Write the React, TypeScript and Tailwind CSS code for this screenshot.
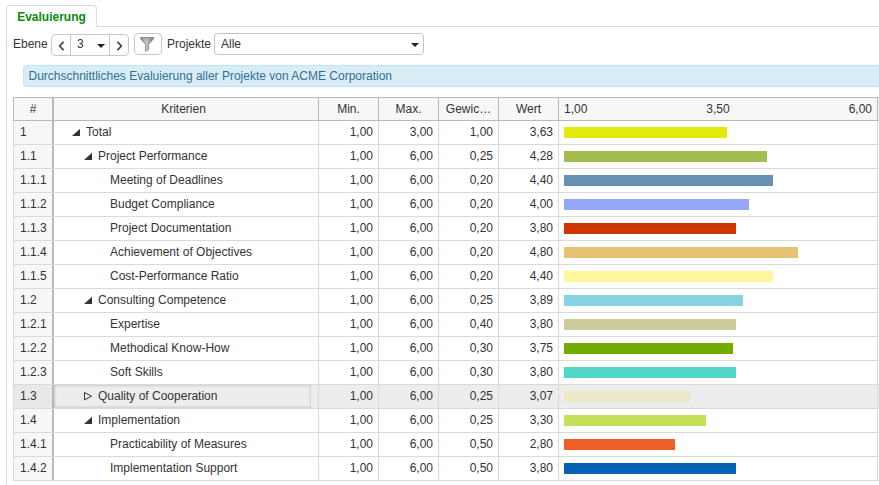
type Row = {
  no: string;
  name: string;
  min: string;
  max: string;
  weight: string;
  value: string;
  bar: number;
  color: string;
  state?: "open" | "closed";
};

const rows: Row[] = [
  { no: "1", name: "Total", min: "1,00", max: "3,00", weight: "1,00", value: "3,63", bar: 163, color: "bg-[#e1ea0b]", state: "open" },
  { no: "1.1", name: "Project Performance", min: "1,00", max: "6,00", weight: "0,25", value: "4,28", bar: 203, color: "bg-[#a5bd4f]", state: "open" },
  { no: "1.1.1", name: "Meeting of Deadlines", min: "1,00", max: "6,00", weight: "0,20", value: "4,40", bar: 209, color: "bg-[#6592b2]" },
  { no: "1.1.2", name: "Budget Compliance", min: "1,00", max: "6,00", weight: "0,20", value: "4,00", bar: 185, color: "bg-[#94a8fa]" },
  { no: "1.1.3", name: "Project Documentation", min: "1,00", max: "6,00", weight: "0,20", value: "3,80", bar: 172, color: "bg-[#cf3600]" },
  { no: "1.1.4", name: "Achievement of Objectives", min: "1,00", max: "6,00", weight: "0,20", value: "4,80", bar: 234, color: "bg-[#e7c273]" },
  { no: "1.1.5", name: "Cost-Performance Ratio", min: "1,00", max: "6,00", weight: "0,20", value: "4,40", bar: 209, color: "bg-[#fff59b]" },
  { no: "1.2", name: "Consulting Competence", min: "1,00", max: "6,00", weight: "0,25", value: "3,89", bar: 179, color: "bg-[#86d3e2]", state: "open" },
  { no: "1.2.1", name: "Expertise", min: "1,00", max: "6,00", weight: "0,40", value: "3,80", bar: 172, color: "bg-[#cccb9c]" },
  { no: "1.2.2", name: "Methodical Know-How", min: "1,00", max: "6,00", weight: "0,30", value: "3,75", bar: 169, color: "bg-[#72ac00]" },
  { no: "1.2.3", name: "Soft Skills", min: "1,00", max: "6,00", weight: "0,30", value: "3,80", bar: 172, color: "bg-[#53d6ca]" },
  { no: "1.3", name: "Quality of Cooperation", min: "1,00", max: "6,00", weight: "0,25", value: "3,07", bar: 126, color: "bg-[#ede9c7]", state: "closed" },
  { no: "1.4", name: "Implementation", min: "1,00", max: "6,00", weight: "0,25", value: "3,30", bar: 142, color: "bg-[#c5e15c]", state: "open" },
  { no: "1.4.1", name: "Practicability of Measures", min: "1,00", max: "6,00", weight: "0,50", value: "2,80", bar: 111, color: "bg-[#f15f29]" },
  { no: "1.4.2", name: "Implementation Support", min: "1,00", max: "6,00", weight: "0,50", value: "3,80", bar: 172, color: "bg-[#0561b1]" },
];

// left padding per outline level
const indents = ["pl-[18px]", "pl-[30px]", "pl-[42px]"];

const columns =
  "grid grid-cols-[40px_265px_60px_60px_60px_60px_319px_1px] border-l";

function Caret() {
  return (
    <svg width="8" height="4" viewBox="0 0 8 4" className="mt-[2px] shrink-0">
      <path d="M0 0h8L4 4z" fill="#222" />
    </svg>
  );
}

function Chevron({ dir }: { dir: "left" | "right" }) {
  return (
    <svg width="7" height="10" viewBox="0 0 7 10" className="mt-[2px]">
      <path
        d={dir === "left" ? "M5.6.8 1.6 5l4 4.2" : "M1.4.8l4 4.2-4 4.2"}
        fill="none"
        stroke="#444"
        strokeWidth="1.7"
      />
    </svg>
  );
}

function TreeArrow({ state }: { state?: "open" | "closed" }) {
  return (
    <svg width="8" height="9" viewBox="0 0 8 9" className="mr-1.5 shrink-0">
      {state === "open" && <path d="M8 .8v7.2H0z" fill="#333" />}
      {state === "closed" && <path d="M.5.5 7.6 4.2.5 7.9z" fill="none" stroke="#333" />}
    </svg>
  );
}

function FilterIcon() {
  return (
    <svg width="14" height="15" viewBox="0 0 14 15">
      <defs>
        <linearGradient id="funnel" x1="0" x2="1">
          <stop offset="0" stopColor="#77777d" />
          <stop offset=".45" stopColor="#c9c9ce" />
          <stop offset="1" stopColor="#66666c" />
        </linearGradient>
      </defs>
      <path d="M.5.5h13v1.3L8.7 7.2v5.2l-3.2 2.1V7.2L.5 1.8z" fill="url(#funnel)" stroke="#808086" strokeWidth=".8" />
      <path d="M1.5 1.6h11" stroke="#a2a2b2" strokeWidth=".8" />
    </svg>
  );
}

function Toolbar() {
  return (
    <div className="flex h-[38px] items-start pt-[6px] pl-[6px]">
      <span className="mt-[3px] w-[38px] leading-[16px]">Ebene</span>
      <div className="mt-px flex h-[22px] w-[78px] rounded border border-[#c8c8c8]">
        <button className="flex w-[19px] items-center justify-center border-r border-[#c8c8c8]">
          <Chevron dir="left" />
        </button>
        <div className="flex w-[39px] items-center justify-between border-r border-[#c8c8c8] pr-[4px] pl-[6px]">
          <span className="-mt-[2px]">3</span>
          <Caret />
        </div>
        <button className="flex w-[18px] items-center justify-center">
          <Chevron dir="right" />
        </button>
      </div>
      <button className="ml-[5px] flex h-[22px] w-[28px] items-center justify-center rounded border border-[#c8c8c8] pr-[2px]">
        <FilterIcon />
      </button>
      <span className="mt-[3px] ml-[5px] w-[47px] leading-[16px]">Projekte</span>
      <div className="flex h-[22px] w-[210px] items-center justify-between rounded border border-[#c4c4c4] pr-[4px] pl-[6px]">
        <span>Alle</span>
        <Caret />
      </div>
    </div>
  );
}

function HeaderRow() {
  const cell = "overflow-hidden border-r border-[#b9b9b9] text-center";
  return (
    <div className={`${columns} h-[24px] border-y border-[#b9b9b9] bg-[#f7f7f7] leading-[22px]`}>
      <div className="border-r-2 border-[#b9b9b9] text-center">#</div>
      <div className={`${cell} pr-[5px]`}>Kriterien</div>
      <div className={cell}>Min.</div>
      <div className={cell}>Max.</div>
      <div className={cell}>Gewic…</div>
      <div className={cell}>Wert</div>
      <div className="flex justify-between border-r border-[#b9b9b9] px-[5px]">
        <span>1,00</span>
        <span>3,50</span>
        <span>6,00</span>
      </div>
      <div />
    </div>
  );
}

function DataRow({ row }: { row: Row }) {
  const selected = row.state === "closed";
  const level = row.no.split(".").length - 1;
  const cell = "border-r border-[#dadada] pr-[5px] text-right";
  return (
    <div className={`${columns} h-[24px] border-b border-[#dadada] leading-[22px] ${selected ? "bg-[#ededed]" : "bg-white"}`}>
      <div className={`border-r-2 border-[#b9b9b9] pl-[6px] ${selected ? "bg-[#e8e8e8]" : "bg-[#f7f7f7]"}`}>{row.no}</div>
      <div className="border-r border-[#dadada] pr-[7px]">
        <div className={`flex h-[23px] items-center ${indents[level]} ${selected ? "shadow-[inset_0_0_3px_#aaa]" : ""}`}>
          <TreeArrow state={row.state} />
          <span className="-mt-px whitespace-nowrap">{row.name}</span>
        </div>
      </div>
      <div className={cell}>{row.min}</div>
      <div className={cell}>{row.max}</div>
      <div className={cell}>{row.weight}</div>
      <div className={cell}>{row.value}</div>
      <div className="flex items-center border-r border-[#dadada] pl-[5px]">
        <div className={`h-[11px] ${row.color}`} style={{ width: row.bar }} />
      </div>
      <div />
    </div>
  );
}

export default function App() {
  return (
    <div className="h-[485px] w-[879px] overflow-hidden bg-white pt-[5px] pl-[6px] font-['Liberation_Sans',Arial,sans-serif] text-[12px] text-[#333]">
      <div className="relative z-10 flex h-[22px] w-[91px] justify-center rounded-t border border-b-0 border-[#dcdcdc] bg-white font-bold leading-[22px] text-[#0b8a0b]">
        Evaluierung
      </div>
      <div className="-mt-px h-[459px] border-t border-l border-[#dcdcdc]">
        <Toolbar />
        <div className="ml-[16px] h-[22px] rounded-l border border-r-0 border-[#bce8f1] bg-[#d9edf7] pl-[4.5px] leading-[20px] text-[#31708f]">
          Durchschnittliches Evaluierung aller Projekte von ACME Corporation
        </div>
        <div className="mt-[10px] ml-[6px] w-[866px]">
          <HeaderRow />
          {rows.map((row) => (
            <DataRow key={row.no} row={row} />
          ))}
        </div>
      </div>
    </div>
  );
}
